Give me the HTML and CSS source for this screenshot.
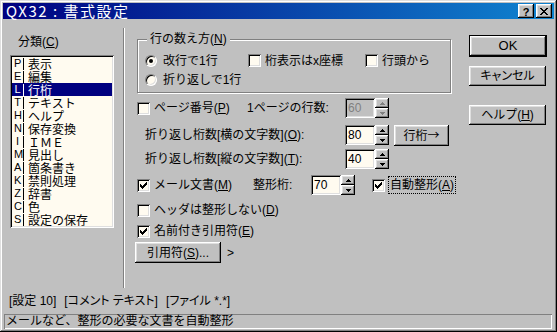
FILE: index.html
```html
<!DOCTYPE html>
<html lang="ja">
<head>
<meta charset="utf-8">
<title>QX32 : 書式設定</title>
<link rel="stylesheet" href="styles.css">
</head>
<body>
<div class="win">
  <div class="titlebar">
    <span class="title">QX32 : 書式設定</span>
    <div class="tbtns">
      <span class="tbtn help">?</span>
      <span class="tbtn"><svg width="8" height="7" viewBox="0 0 8 7"><path d="M0 0h2v1H0zM6 0h2v1H6zM1 1h2v1H1zM5 1h2v1H5zM2 2h4v1H2zM3 3h2v1H3zM2 4h4v1H2zM1 5h2v1H1zM5 5h2v1H5zM0 6h2v1H0zM6 6h2v1H6z" fill="#000"/></svg></span>
    </div>
  </div>
  <div class="client">
    <div class="main">
      <div class="leftcol">
        <div class="lbl">分類(<u>C</u>)</div>
        <div class="list">
          <div class="item"><span class="key">P</span><span class="bar"></span><span class="itxt">表示</span></div>
          <div class="item"><span class="key">E</span><span class="bar"></span><span class="itxt">編集</span></div>
          <div class="item sel"><span class="key">L</span><span class="bar"></span><span class="itxt">行桁</span></div>
          <div class="item"><span class="key">T</span><span class="bar"></span><span class="itxt">テキスト</span></div>
          <div class="item"><span class="key">H</span><span class="bar"></span><span class="itxt">ヘルプ</span></div>
          <div class="item"><span class="key">N</span><span class="bar"></span><span class="itxt">保存変換</span></div>
          <div class="item"><span class="key">I</span><span class="bar"></span><span class="itxt">ＩＭＥ</span></div>
          <div class="item"><span class="key">M</span><span class="bar"></span><span class="itxt">見出し</span></div>
          <div class="item"><span class="key">A</span><span class="bar"></span><span class="itxt">箇条書き</span></div>
          <div class="item"><span class="key">K</span><span class="bar"></span><span class="itxt">禁則処理</span></div>
          <div class="item"><span class="key">Z</span><span class="bar"></span><span class="itxt">辞書</span></div>
          <div class="item"><span class="key">C</span><span class="bar"></span><span class="itxt">色</span></div>
          <div class="item"><span class="key">S</span><span class="bar"></span><span class="itxt">設定の保存</span></div>
        </div>
      </div>
      <div class="sep"></div>
      <div class="midcol">
        <fieldset class="group">
          <legend>行の数え方(<u>N</u>)</legend>
          <div class="grow">
            <span class="opt c1"><span class="radio on"></span><span>改行で1行</span></span>
            <span class="opt c2"><span class="check"></span><span>桁表示はx座標</span></span>
            <span class="opt"><span class="check"></span><span>行頭から</span></span>
          </div>
          <div class="grow">
            <span class="opt c1"><span class="radio"></span><span>折り返しで1行</span></span>
          </div>
        </fieldset>

        <div class="row r-page">
          <span class="opt w-page"><span class="check"></span><span>ページ番号(<u>P</u>)</span></span>
          <span class="w-lines">1ページの行数:</span>
          <span class="field disabled">60</span>
          <span class="spin disabled">
            <span class="sbtn"><svg width="5" height="3" viewBox="0 0 5 3"><path d="M2 0h1v1H2zM1 1h3v1H1zM0 2h5v1H0z"/></svg></span>
            <span class="sbtn"><svg width="5" height="3" viewBox="0 0 5 3"><path d="M0 0h5v1H0zM1 1h3v1H1zM2 2h1v1H2z"/></svg></span>
          </span>
        </div>

        <div class="row r-o">
          <span class="w-wrap">折り返し桁数[横の文字数](<u>O</u>):</span>
          <span class="field">80</span>
          <span class="spin">
            <span class="sbtn"><svg width="5" height="3" viewBox="0 0 5 3"><path d="M2 0h1v1H2zM1 1h3v1H1zM0 2h5v1H0z"/></svg></span>
            <span class="sbtn"><svg width="5" height="3" viewBox="0 0 5 3"><path d="M0 0h5v1H0zM1 1h3v1H1zM2 2h1v1H2z"/></svg></span>
          </span>
          <span class="btn b-gyo"><span class="cjk">行桁→</span></span>
        </div>

        <div class="row r-t">
          <span class="w-wrap">折り返し桁数[縦の文字数](<u>T</u>):</span>
          <span class="field">40</span>
          <span class="spin">
            <span class="sbtn"><svg width="5" height="3" viewBox="0 0 5 3"><path d="M2 0h1v1H2zM1 1h3v1H1zM0 2h5v1H0z"/></svg></span>
            <span class="sbtn"><svg width="5" height="3" viewBox="0 0 5 3"><path d="M0 0h5v1H0zM1 1h3v1H1zM2 2h1v1H2z"/></svg></span>
          </span>
        </div>

        <div class="row r-mail">
          <span class="opt w-mail"><span class="check on"><svg width="7" height="7" viewBox="0 0 7 7"><path d="M0 2h1v3H0zM1 3h1v3H1zM2 4h1v3H2zM3 3h1v3H3zM4 2h1v3H4zM5 1h1v3H5zM6 0h1v3H6z"/></svg></span><span>メール文書(<u>M</u>)</span></span>
          <span class="w-seikei">整形桁:</span>
          <span class="field">70</span>
          <span class="spin">
            <span class="sbtn"><svg width="5" height="3" viewBox="0 0 5 3"><path d="M2 0h1v1H2zM1 1h3v1H1zM0 2h5v1H0z"/></svg></span>
            <span class="sbtn"><svg width="5" height="3" viewBox="0 0 5 3"><path d="M0 0h5v1H0zM1 1h3v1H1zM2 2h1v1H2z"/></svg></span>
          </span>
          <span class="opt auto"><span class="check on"><svg width="7" height="7" viewBox="0 0 7 7"><path d="M0 2h1v3H0zM1 3h1v3H1zM2 4h1v3H2zM3 3h1v3H3zM4 2h1v3H4zM5 1h1v3H5zM6 0h1v3H6z"/></svg></span><span class="focus">自動整形(<u>A</u>)</span></span>
        </div>

        <div class="row r-head">
          <span class="opt"><span class="check"></span><span>ヘッダは整形しない(<u>D</u>)</span></span>
        </div>

        <div class="row r-name">
          <span class="opt"><span class="check on"><svg width="7" height="7" viewBox="0 0 7 7"><path d="M0 2h1v3H0zM1 3h1v3H1zM2 4h1v3H2zM3 3h1v3H3zM4 2h1v3H4zM5 1h1v3H5zM6 0h1v3H6z"/></svg></span><span>名前付き引用符(<u>E</u>)</span></span>
        </div>

        <div class="row r-quote">
          <span class="btn b-quote"><span>引用符(<u>S</u>)...</span></span>
          <span class="gt">&gt;</span>
        </div>
      </div>
      <div class="rightcol">
        <span class="btn b-ok">OK</span>
        <span class="btn b-cancel">キャンセル</span>
        <span class="btn b-help"><span>ヘルプ(<u>H</u>)</span></span>
      </div>
    </div>
    <div class="info"><span>[設定 10]</span><span>[コメント テキスト]</span><span>[ファイル *.*]</span></div>
    <div class="status">メールなど、整形の必要な文書を自動整形</div>
  </div>
</div>
</body>
</html>
```

FILE: styles.css
```css
* { box-sizing: border-box; }
html, body { margin: 0; padding: 0; }
body {
  width: 557px;
  height: 332px;
  overflow: hidden;
  background: #c0c0c0;
  font-family: "Liberation Sans", "Noto Sans CJK JP", sans-serif;
  font-size: 12px;
  line-height: 14px;
  color: #000;
  text-autospace: no-autospace;
}
u { text-decoration: underline; text-underline-offset: 1px; }
.cjk { font-family: "Noto Sans CJK JP", sans-serif; }

.win {
  width: 557px;
  height: 332px;
  background: #c0c0c0;
  padding: 3px;
  box-shadow: inset -1px -1px #000, inset 1px 1px #dfdfdf, inset -2px -2px #808080, inset 2px 2px #fff;
  display: flex;
  flex-direction: column;
}

.titlebar {
  height: 16px;
  flex: none;
  display: flex;
  align-items: center;
  background: linear-gradient(90deg, #000080 0%, #1084d0 100%);
  color: #fff;
  padding-left: 3px;
  font-family: "Noto Sans CJK JP", sans-serif;
  font-size: 15px;
  line-height: 16px;
}
.title { letter-spacing: 1.5px; }
.tbtns { margin-left: auto; display: flex; gap: 2px; padding-right: 2px; }
.tbtn {
  width: 16px;
  height: 14px;
  background: #c0c0c0;
  box-shadow: inset -1px -1px #000, inset 1px 1px #fff, inset -2px -2px #808080, inset 2px 2px #dfdfdf;
  display: flex;
  align-items: center;
  justify-content: center;
  color: #000;
}
.tbtn.help { font: bold 11px/12px "Liberation Sans", sans-serif; padding-top: 1px; }

.client { flex: 1; display: flex; flex-direction: column; }
.main { height: 269px; display: flex; flex: none; }

.leftcol { width: 120px; padding: 16px 0 0 7px; flex: none; }
.lbl { margin-left: 8px; height: 14px; }
.list {
  margin-top: 6px;
  width: 104px;
  height: 173px;
  background: #fffbf0;
  padding: 2px;
  box-shadow: inset 1px 1px #808080, inset -1px -1px #fff, inset 2px 2px #000, inset -2px -2px #dfdfdf;
}
.item { height: 13px; line-height: 13px; display: flex; align-items: center; white-space: nowrap; }
.item.sel { background: #000080; color: #fff; }
.key { width: 7px; margin-left: 2px; text-align: center; font-size: 11px; }
.bar { width: 1px; height: 12px; background: currentColor; margin: 0 4px 0 2px; }
.itxt { font-family: "Noto Sans CJK JP", sans-serif; line-height: 13px; }

.sep {
  width: 2px;
  margin-top: 9px;
  height: 260px;
  border-left: 1px solid #808080;
  border-right: 1px solid #fff;
  flex: none;
}

.midcol { width: 335px; padding: 13px 0 0 12px; flex: none; }

.group {
  margin: 0;
  width: 314px;
  min-inline-size: 0;
  border: 1px solid #808080;
  box-shadow: inset 1px 1px #fff, 1px 1px #fff;
  padding: 4px 6px 3px 7px;
}
.group legend {
  padding: 0 3px;
  margin-left: 2px;
  height: 15px;
  line-height: 15px;
  background: #c0c0c0;
}
.grow { display: flex; align-items: center; height: 19px; }
.opt { display: flex; align-items: center; gap: 4px; white-space: nowrap; }
.c1 { width: 103px; gap: 6px; }
.c2 { width: 117px; }

.radio {
  width: 12px;
  height: 12px;
  border-radius: 50%;
  background: #fffbf0;
  border: 1px solid;
  border-color: #808080 #fff #fff #808080;
  box-shadow: inset 1px 1px #000, inset -1px -1px #dfdfdf;
  display: flex;
  align-items: center;
  justify-content: center;
  flex: none;
}
.radio.on::after {
  content: "";
  width: 4px;
  height: 4px;
  border-radius: 50%;
  background: #000;
}
.check {
  width: 13px;
  height: 13px;
  background: #fffbf0;
  box-shadow: inset 1px 1px #808080, inset -1px -1px #fff, inset 2px 2px #000, inset -2px -2px #dfdfdf;
  display: flex;
  align-items: center;
  justify-content: center;
  flex: none;
}
.check svg { fill: #000; display: block; }

.row { display: flex; align-items: center; height: 20px; white-space: nowrap; }
.r-page { margin-top: 5px; }
.r-o { margin-top: 7px; padding-left: 8px; }
.r-t { margin-top: 4px; padding-left: 8px; }
.r-mail { margin-top: 6px; }
.r-head { margin-top: 6px; height: 18px; }
.r-name { margin-top: 3px; height: 18px; }
.r-quote { margin-top: 2px; height: 21px; }

.w-page { width: 110px; }
.w-lines { width: 98px; }
.w-wrap { width: 200px; }
.w-mail { width: 116px; }
.w-seikei { width: 58px; }

.field {
  width: 30px;
  height: 20px;
  background: #fffbf0;
  padding: 3px 0 0 3px;
  line-height: 14px;
  box-shadow: inset 1px 1px #808080, inset -1px -1px #fff, inset 2px 2px #000, inset -2px -2px #dfdfdf;
  flex: none;
}
.field.disabled { background: #c0c0c0; color: #808080; }

.spin { width: 14px; height: 20px; display: flex; flex-direction: column; flex: none; }
.sbtn {
  height: 10px;
  background: #c0c0c0;
  box-shadow: inset -1px -1px #000, inset 1px 1px #fff, inset -2px -2px #808080, inset 2px 2px #dfdfdf;
  display: flex;
  align-items: center;
  justify-content: center;
}
.sbtn svg { fill: #000; display: block; }
.spin.disabled .sbtn svg { fill: #808080; }

.btn {
  display: flex;
  align-items: center;
  justify-content: center;
  background: #c0c0c0;
  box-shadow: inset -1px -1px #000, inset 1px 1px #fff, inset -2px -2px #808080, inset 2px 2px #dfdfdf;
  white-space: nowrap;
  flex: none;
}
.b-gyo { margin-left: 5px; width: 55px; height: 21px; }
.b-quote { margin-left: -2px; width: 86px; height: 21px; }
.gt { margin-left: 6px; }

.auto { margin-left: 17px; }
.focus { outline: 1px dotted #000; outline-offset: 0; padding: 1px 1px; line-height: 14px; }

.rightcol { margin-left: 9px; padding-top: 16px; display: flex; flex-direction: column; flex: none; }
.b-ok {
  width: 78px;
  height: 22px;
  font-size: 13px;
  box-shadow: inset 0 0 0 1px #000, inset -2px -2px #000, inset 2px 2px #fff, inset -3px -3px #808080, inset 3px 3px #dfdfdf;
}
.b-cancel { width: 77px; height: 20px; margin-top: 9px; font-feature-settings: "palt"; }
.b-help { width: 77px; height: 20px; margin-top: 19px; }

.info {
  margin-top: 6px;
  padding-left: 6px;
  height: 14px;
  line-height: 14px;
  white-space: nowrap;
  display: flex;
  gap: 8px;
  font-feature-settings: "palt";
}
.status {
  margin: 6px 2px 0 1px;
  height: 15px;
  line-height: 15px;
  padding-left: 2px;
  box-shadow: inset 1px 1px #808080, inset -1px -1px #fff;
  white-space: nowrap;
}
```
